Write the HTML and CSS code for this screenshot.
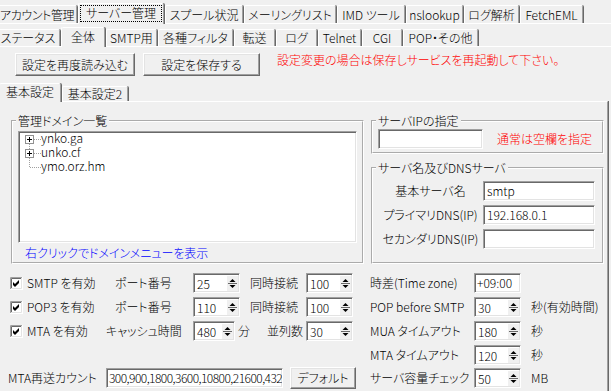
FILE: index.html
```html
<!DOCTYPE html>
<html lang="ja">
<head>
    <meta charset="UTF-8">
    <meta name="viewport" content="width=device-width, initial-scale=1.0">
    <title>サーバー管理</title>
    <link rel="stylesheet" href="styles.css">
</head>
<body>
    <svg class="defs" width="0" height="0">
        <symbol id="arrows" viewBox="0 0 11 15">
            <rect width="11" height="15" fill="#f0f0f0"/>
            <polygon points="2.5,6 8.5,6 5.5,3" fill="#000"/>
            <path d="M1 7.5H10" stroke="#696969"/>
            <polygon points="2.5,9 8.5,9 5.5,12" fill="#000"/>
        </symbol>
        <symbol id="checked" viewBox="0 0 13 13">
            <rect width="13" height="13" fill="#fff"/>
            <path d="M0.5 12V0.5H12" stroke="#a0a0a0" fill="none"/>
            <path d="M1.5 11V1.5H11" stroke="#696969" fill="none"/>
            <path d="M1 11.5H11.5V1" stroke="#e3e3e3" fill="none"/>
            <path d="M3 5L5 7L9 3L9 6L5 10L3 8Z" fill="#000"/>
        </symbol>
    </svg>

    <div class="tabs tabs-main">
        <div class="tab">アカウント管理</div>
        <div class="tab active"><span class="focus">サーバー管理</span></div>
        <div class="tab">スプール状況</div>
        <div class="tab">メーリングリスト</div>
        <div class="tab">IMD ツール</div>
        <div class="tab">nslookup</div>
        <div class="tab">ログ解析</div>
        <div class="tab">FetchEML</div>
    </div>

    <div class="page page-main">
        <div class="tabs tabs-sub">
            <div class="tab">ステータス</div>
            <div class="tab active">全体</div>
            <div class="tab">SMTP用</div>
            <div class="tab">各種フィルタ</div>
            <div class="tab">転送</div>
            <div class="tab">ログ</div>
            <div class="tab">Telnet</div>
            <div class="tab">CGI</div>
            <div class="tab">POP・その他</div>
        </div>

        <div class="page page-sub">
            <div class="toolbar">
                <button class="btn btn-reload">設定を再度読み込む</button>
                <button class="btn btn-save">設定を保存する</button>
                <span class="warn toolbar-note">設定変更の場合は保存しサービスを再起動して下さい。</span>
            </div>

            <div class="tabs tabs-inner">
                <div class="tab active">基本設定</div>
                <div class="tab">基本設定2</div>
            </div>

            <div class="page page-inner">
                <div class="groups">
                    <fieldset class="group group-domain">
                        <legend>管理ドメイン一覧</legend>
                        <div class="tree">
                            <div class="node">
                                <svg class="twig" width="19" height="14">
                                    <path d="M7.5 12V14" stroke="#a0a0a0" stroke-dasharray="1 1"/>
                                    <path d="M12 7.5H19" stroke="#a0a0a0" stroke-dasharray="1 1"/>
                                    <rect x="3.5" y="3.5" width="8" height="8" fill="#fff" stroke="#919191"/>
                                    <path d="M5 7.5H10M7.5 5V10" stroke="#000"/>
                                </svg>
                                <span class="node-name">ynko.ga</span>
                            </div>
                            <div class="node">
                                <svg class="twig" width="19" height="14">
                                    <path d="M7.5 0V3M7.5 12V14" stroke="#a0a0a0" stroke-dasharray="1 1"/>
                                    <path d="M12 7.5H19" stroke="#a0a0a0" stroke-dasharray="1 1"/>
                                    <rect x="3.5" y="3.5" width="8" height="8" fill="#fff" stroke="#919191"/>
                                    <path d="M5 7.5H10M7.5 5V10" stroke="#000"/>
                                </svg>
                                <span class="node-name">unko.cf</span>
                            </div>
                            <div class="node">
                                <svg class="twig" width="19" height="14">
                                    <path d="M7.5 0V7.5H19" stroke="#a0a0a0" stroke-dasharray="1 1" fill="none"/>
                                </svg>
                                <span class="node-name">ymo.orz.hm</span>
                            </div>
                        </div>
                        <div class="hint">右クリックでドメインメニューを表示</div>
                    </fieldset>

                    <div class="group-col">
                        <fieldset class="group group-ip">
                            <legend>サーバIPの指定</legend>
                            <div class="ip-row">
                                <span class="field field-ip"></span>
                                <span class="warn">通常は空欄を指定</span>
                            </div>
                        </fieldset>
                        <fieldset class="group group-dns">
                            <legend>サーバ名及びDNSサーバ</legend>
                            <div class="dns-row">
                                <span class="dns-label">基本サーバ名</span>
                                <span class="field field-dns">smtp</span>
                            </div>
                            <div class="dns-row">
                                <span class="dns-label">プライマリDNS(IP)</span>
                                <span class="field field-dns">192.168.0.1</span>
                            </div>
                            <div class="dns-row">
                                <span class="dns-label">セカンダリDNS(IP)</span>
                                <span class="field field-dns"></span>
                            </div>
                        </fieldset>
                    </div>
                </div>

                <div class="settings">
                    <div class="row">
                        <div class="c1"><span class="check"><svg width="13" height="13"><use href="#checked"/></svg>SMTP を有効</span></div>
                        <div class="c2 indent">ポート番号</div>
                        <div class="c3"><span class="spin"><span class="val">25</span><svg class="arrows" width="11" height="15"><use href="#arrows"/></svg></span></div>
                        <div class="c4">同時接続</div>
                        <div class="c5"><span class="spin"><span class="val">100</span><svg class="arrows" width="11" height="15"><use href="#arrows"/></svg></span></div>
                        <div class="c6">時差(Time zone)</div>
                        <div class="c7"><span class="field field-tz">+09:00</span></div>
                    </div>
                    <div class="row">
                        <div class="c1"><span class="check"><svg width="13" height="13"><use href="#checked"/></svg>POP3 を有効</span></div>
                        <div class="c2 indent">ポート番号</div>
                        <div class="c3"><span class="spin"><span class="val">110</span><svg class="arrows" width="11" height="15"><use href="#arrows"/></svg></span></div>
                        <div class="c4">同時接続</div>
                        <div class="c5"><span class="spin"><span class="val">100</span><svg class="arrows" width="11" height="15"><use href="#arrows"/></svg></span></div>
                        <div class="c6">POP before SMTP</div>
                        <div class="c7"><span class="spin"><span class="val">30</span><svg class="arrows" width="11" height="15"><use href="#arrows"/></svg></span></div>
                        <div class="c8">秒(有効時間)</div>
                    </div>
                    <div class="row">
                        <div class="c1"><span class="check"><svg width="13" height="13"><use href="#checked"/></svg>MTA を有効</span></div>
                        <div class="c2">キャッシュ時間</div>
                        <div class="c3"><span class="spin"><span class="val">480</span><svg class="arrows" width="11" height="15"><use href="#arrows"/></svg></span><span class="unit">分</span></div>
                        <div class="c4 end">並列数</div>
                        <div class="c5"><span class="spin"><span class="val">30</span><svg class="arrows" width="11" height="15"><use href="#arrows"/></svg></span></div>
                        <div class="c6">MUA タイムアウト</div>
                        <div class="c7"><span class="spin"><span class="val">180</span><svg class="arrows" width="11" height="15"><use href="#arrows"/></svg></span></div>
                        <div class="c8">秒</div>
                    </div>
                    <div class="row">
                        <div class="blank"></div>
                        <div class="c6">MTA タイムアウト</div>
                        <div class="c7"><span class="spin"><span class="val">120</span><svg class="arrows" width="11" height="15"><use href="#arrows"/></svg></span></div>
                        <div class="c8">秒</div>
                    </div>
                    <div class="row row-last">
                        <div class="c1 resend-label">MTA再送カウント</div>
                        <div class="resend">
                            <span class="field field-resend">300,900,1800,3600,10800,21600,432</span>
                            <button class="btn btn-default">デフォルト</button>
                        </div>
                        <div class="c6">サーバ容量チェック</div>
                        <div class="c7"><span class="spin"><span class="val">50</span><svg class="arrows" width="11" height="15"><use href="#arrows"/></svg></span></div>
                        <div class="c8">MB</div>
                    </div>
                </div>
            </div>
        </div>
    </div>
</body>
</html>
```

FILE: styles.css
```css
* {
    box-sizing: border-box;
}
body {
    margin: 0;
    width: 611px;
    height: 391px;
    overflow: hidden;
    background: #f0f0f0;
    color: #000;
    font-family: "Noto Sans CJK JP", sans-serif;
    font-size: 12px;
    font-weight: 300;
    line-height: 14px;
    font-feature-settings: "palt";
}
.defs {
    position: absolute;
}

/* tab strips */
.tabs {
    display: flex;
    align-items: flex-end;
}
.tab {
    flex: none;
    display: flex;
    align-items: center;
    justify-content: center;
    margin-right: 1px;
    border-top: 1px solid #fff;
    border-left: 1px solid #fff;
    border-right: 1px solid #a0a0a0;
    border-radius: 2px 2px 0 0;
    box-shadow: 1px 0 0 #696969;
    white-space: nowrap;
}
.tab.active {
    position: relative;
    z-index: 1;
    margin-bottom: -1px;
    padding-bottom: 2px;
    background: #f0f0f0;
}
.focus {
    flex: 1;
    align-self: stretch;
    margin: 1px 1px 0;
    border: 1px dotted #000;
    text-align: center;
    line-height: 14px;
}

.tabs-main {
    height: 23px;
}
.tabs-main .tab {
    height: 18px;
}
.tabs-main .tab.active {
    height: 21px;
}
.tabs-main .tab:nth-child(1) { width: 79px; margin-left: -2px; justify-content: flex-start; padding-left: 1px; letter-spacing: -0.4px; }
.tabs-main .tab:nth-child(2) { width: 86px; }
.tabs-main .tab:nth-child(3) { width: 78px; }
.tabs-main .tab:nth-child(4) { width: 92px; }
.tabs-main .tab:nth-child(5) { width: 68px; }
.tabs-main .tab:nth-child(6) { width: 57px; }
.tabs-main .tab:nth-child(7) { width: 55px; }
.tabs-main .tab:nth-child(8) { width: 63px; }

.tabs-sub {
    height: 22px;
}
.tabs-sub .tab {
    height: 17px;
}
.tabs-sub .tab.active {
    height: 20px;
}
.tabs-sub .tab:nth-child(1) { width: 64px; margin-left: -4px; }
.tabs-sub .tab:nth-child(2) { width: 44px; }
.tabs-sub .tab:nth-child(3) { width: 51px; }
.tabs-sub .tab:nth-child(4) { width: 75px; }
.tabs-sub .tab:nth-child(5) { width: 41px; }
.tabs-sub .tab:nth-child(6) { width: 41px; }
.tabs-sub .tab:nth-child(7) { width: 43px; }
.tabs-sub .tab:nth-child(8) { width: 40px; }
.tabs-sub .tab:nth-child(9) { width: 75px; }

.tabs-inner {
    height: 25px;
}
.tabs-inner .tab {
    height: 15px;
}
.tabs-inner .tab.active {
    height: 19px;
}
.tabs-inner .tab:nth-child(1) { width: 62px; margin-left: -1px; }
.tabs-inner .tab:nth-child(2) { width: 66px; }

/* pages */
.page {
    border-top: 1px solid #fff;
}
.page-inner {
    width: 608px;
    height: 290px;
    border-right: 1px solid #a0a0a0;
    box-shadow: 1px 0 0 #696969;
}

/* toolbar */
.toolbar {
    display: flex;
    align-items: flex-start;
    height: 29px;
    padding: 6px 0 0 15px;
}
.btn {
    height: 23px;
    padding: 0;
    background: #f0f0f0;
    border: 1px solid;
    border-color: #fff #696969 #696969 #fff;
    box-shadow: inset -1px -1px 0 #a0a0a0, inset 1px 1px 0 #e3e3e3;
    font: inherit;
    color: #000;
    white-space: nowrap;
}
.btn-reload {
    width: 120px;
    margin-right: 8px;
}
.btn-save {
    width: 117px;
}
.warn {
    color: #ff0000;
    white-space: nowrap;
}
.toolbar-note {
    margin-left: 17px;
}

/* group boxes */
.groups {
    display: flex;
    gap: 7px;
    padding: 12px 0 0 11px;
}
.group {
    margin: 0;
    min-width: 0;
    border: 2px groove #fff;
    padding: 0 5px;
}
.group legend {
    margin-left: -2px;
    padding: 0 2px;
    line-height: 14px;
    white-space: nowrap;
}
.group-domain {
    width: 353px;
    height: 150px;
    padding-top: 3px;
}
.group-col {
    display: flex;
    flex-direction: column;
    gap: 7px;
}
.group-ip {
    width: 233px;
    height: 40px;
    padding-top: 1px;
}
.group-dns {
    width: 233px;
    height: 103px;
    padding-top: 6px;
}

/* sunken boxes */
.field,
.spin,
.tree {
    background: #fff;
    border: 1px solid;
    border-color: #a0a0a0 #fff #fff #a0a0a0;
    box-shadow: inset 1px 1px 0 #696969, inset -1px -1px 0 #e3e3e3;
}
.field {
    display: block;
    height: 20px;
    padding: 0 3px;
    line-height: 17px;
    white-space: nowrap;
    overflow: hidden;
}

.tree {
    height: 112px;
    padding: 0 0 0 3px;
}
.node {
    display: flex;
    align-items: flex-start;
    height: 14px;
}
.node-name {
    line-height: 12px;
}
.twig {
    flex: none;
}
.hint {
    margin: 3px 0 0 7px;
    color: #0000ff;
    white-space: nowrap;
}

.ip-row {
    display: flex;
    align-items: center;
}
.field-ip {
    width: 105px;
    margin-right: 14px;
}
.dns-row {
    display: flex;
    align-items: center;
    height: 20px;
    margin-bottom: 4px;
}
.dns-label {
    width: 105px;
    text-align: center;
    white-space: nowrap;
}
.field-dns {
    width: 112px;
}

/* settings rows */
.settings {
    margin-top: 7px;
}
.row {
    display: flex;
    align-items: center;
    height: 24px;
    white-space: nowrap;
}
.row-last {
    height: 22px;
}
.c1 { width: 106px; padding-left: 10px; }
.c2 { width: 87px; }
.c3 { width: 57px; display: flex; align-items: center; }
.c4 { width: 56px; }
.c5 { width: 64px; }
.c6 { width: 104px; }
.c7 { width: 55px; }
.c8 { padding-left: 2px; }
.blank { width: 370px; }
.indent { padding-left: 9px; }
.end { text-align: right; padding-right: 3px; }
.unit { margin-left: 3px; }

.check {
    display: flex;
    align-items: center;
    gap: 4px;
}
.check svg {
    flex: none;
}

.spin {
    display: flex;
    align-items: center;
    width: 47px;
    height: 20px;
    padding: 0 1px 0 3px;
}
.spin .val {
    flex: 1;
    line-height: 17px;
}
.arrows {
    flex: none;
}
.field-tz {
    width: 47px;
    padding-left: 2px;
}

.resend-label {
    padding-left: 8px;
}
.resend {
    display: flex;
    align-items: center;
    width: 264px;
}
.field-resend {
    width: 177px;
    padding-left: 2px;
    letter-spacing: -0.55px;
}
.btn-default {
    width: 66px;
    height: 22px;
    margin-left: 7px;
}
```
